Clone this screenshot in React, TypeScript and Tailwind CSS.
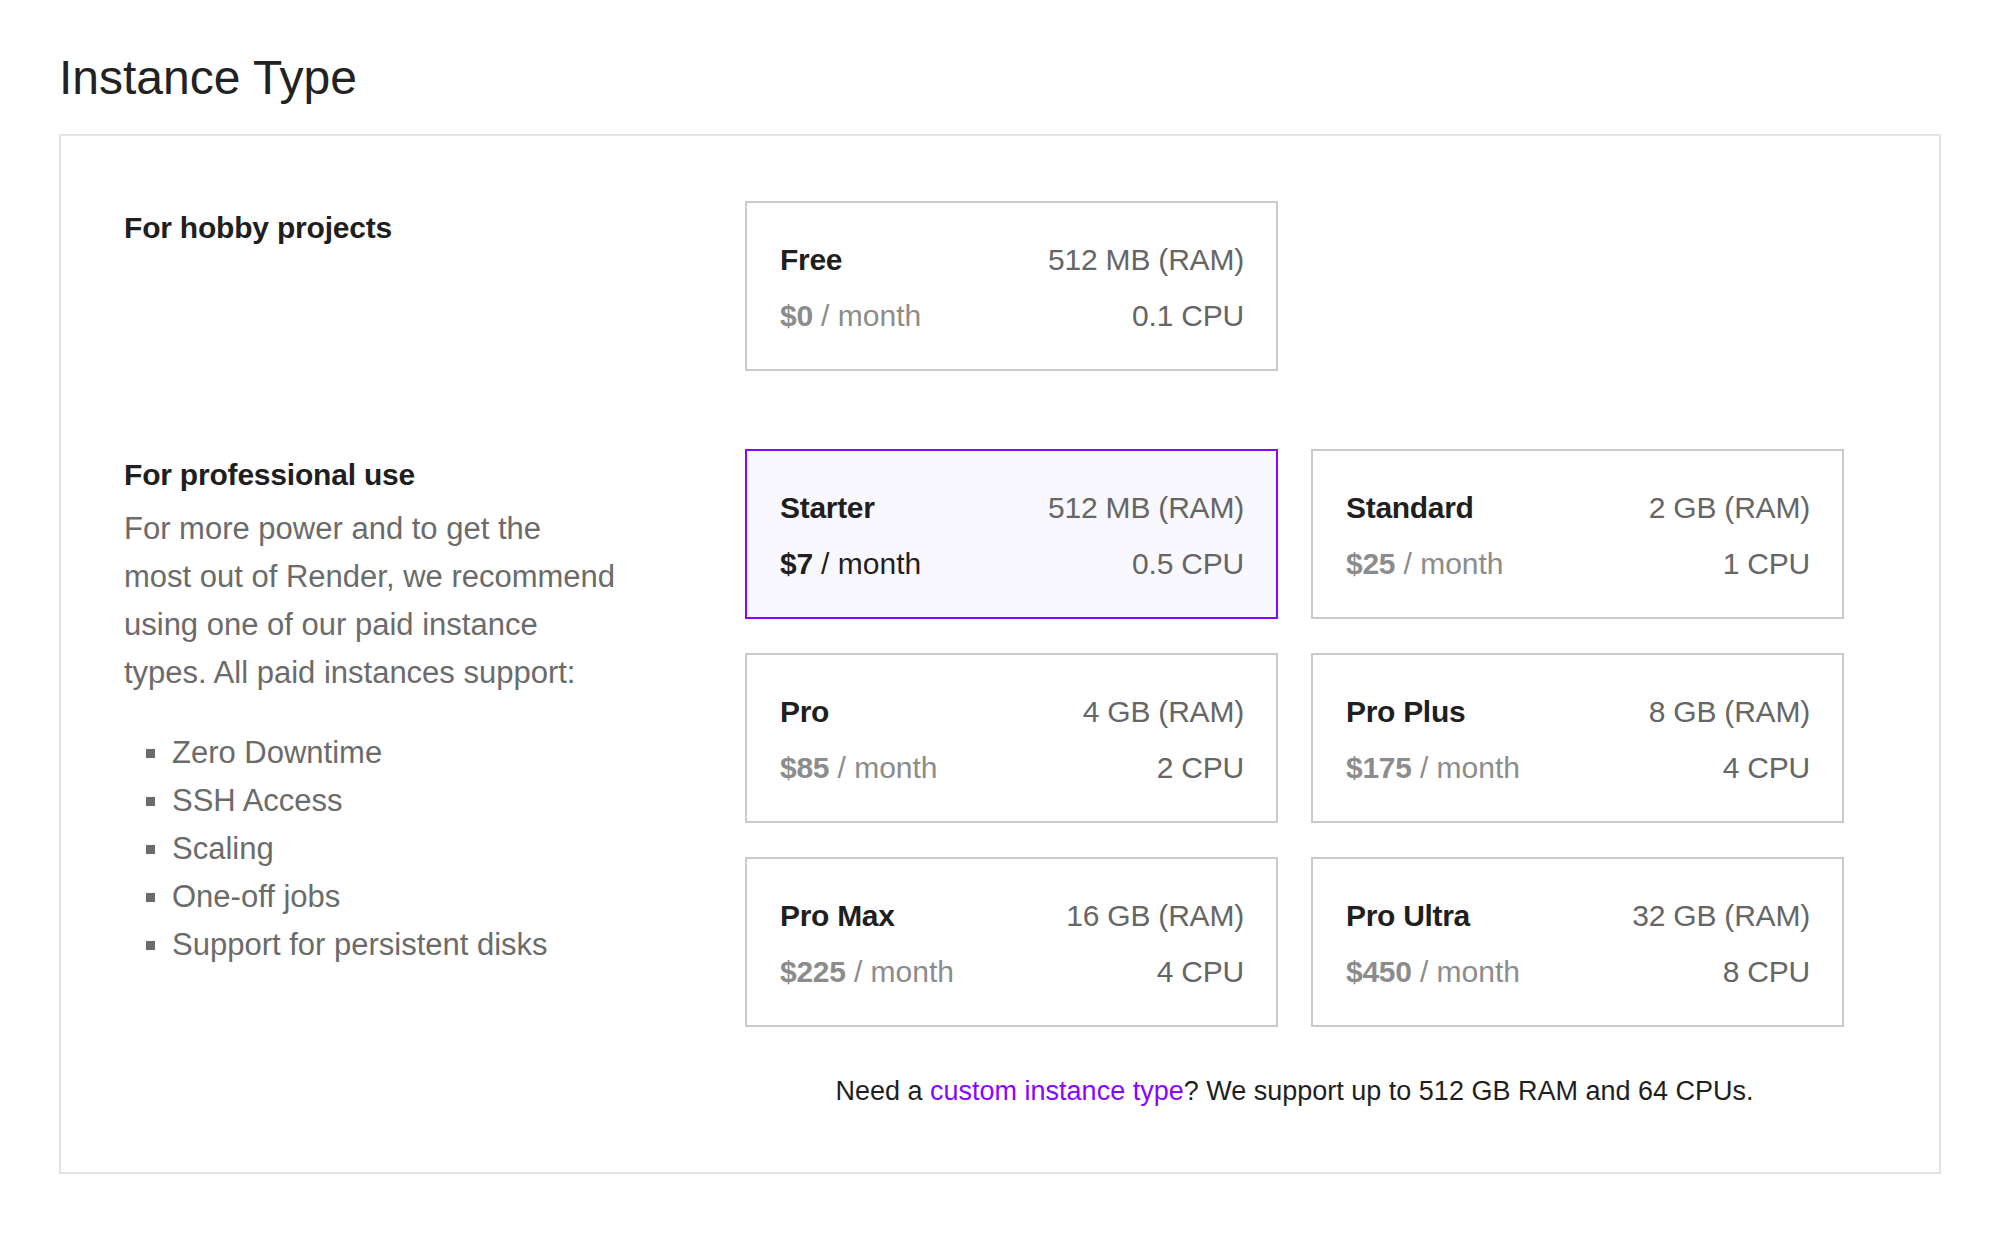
import * as React from "react";

export interface Plan {
  name: string;
  price: string;
  ram: string;
  cpu: string;
}

const HOBBY_PLAN: Plan = { name: "Free", price: "$0", ram: "512 MB (RAM)", cpu: "0.1 CPU" };

const PRO_PLANS: Plan[] = [
  { name: "Starter", price: "$7", ram: "512 MB (RAM)", cpu: "0.5 CPU" },
  { name: "Standard", price: "$25", ram: "2 GB (RAM)", cpu: "1 CPU" },
  { name: "Pro", price: "$85", ram: "4 GB (RAM)", cpu: "2 CPU" },
  { name: "Pro Plus", price: "$175", ram: "8 GB (RAM)", cpu: "4 CPU" },
  { name: "Pro Max", price: "$225", ram: "16 GB (RAM)", cpu: "4 CPU" },
  { name: "Pro Ultra", price: "$450", ram: "32 GB (RAM)", cpu: "8 CPU" },
];

const FEATURES = ["Zero Downtime", "SSH Access", "Scaling", "One-off jobs", "Support for persistent disks"];

function PlanCard({ plan, selected }: { plan: Plan; selected?: boolean }) {
  return (
    <div
      className={[
        "flex h-[170px] w-[533px] flex-col gap-[11px] border-2 pt-[34px] pr-[32px] pb-[31px] pl-[33px] text-[30px] leading-[45px]",
        selected ? "border-[#8a05ff] bg-[#faf8ff]" : "border-[#cacaca] bg-white",
      ].join(" ")}
    >
      <div className="flex items-center justify-between">
        <span className="font-bold tracking-[-0.3px] text-[#1f1f1f]">{plan.name}</span>
        <span className="tracking-[-0.2px] text-[#666666]">{plan.ram}</span>
      </div>
      <div className="flex items-center justify-between">
        <span className={selected ? "text-[#1f1f1f]" : "text-[#8c8c8c]"}>
          <span className="font-bold tracking-[-0.3px]">{plan.price}</span>
          <span> / month</span>
        </span>
        <span className="tracking-[-0.2px] text-[#666666]">{plan.cpu}</span>
      </div>
    </div>
  );
}

export default function App() {
  return (
    <div className="min-h-screen bg-white pt-[50px] pr-[63px] pl-[59px] font-['Liberation_Sans',Arial,sans-serif]">
      <h1 className="text-[48px] leading-[56px] text-[#222222]">Instance Type</h1>

      <section className="mt-[28px] border-2 border-[#e4e4e4] pt-[65px] pb-[61px] pl-[63px]">
        <div className="flex items-start">
          <div className="w-[621px] shrink-0 pt-[4px]">
            <h2 className="text-[30px] leading-[45px] font-bold tracking-[-0.2px] text-[#1f1f1f]">
              For hobby projects
            </h2>
          </div>
          <PlanCard plan={HOBBY_PLAN} />
        </div>

        <div className="mt-[78px] flex items-start">
          <div className="w-[621px] shrink-0 pt-[3px]">
            <h2 className="text-[30px] leading-[45px] font-bold tracking-[-0.2px] text-[#1f1f1f]">
              For professional use
            </h2>
            <p className="mt-2 text-[31px] leading-[48px] text-[#6b6b6b]">
              For more power and to get the
              <br />
              most out of Render, we recommend
              <br />
              using one of our paid instance
              <br />
              types. All paid instances support:
            </p>
            <ul className="mt-[32px] text-[31px] leading-[48px] text-[#6b6b6b]">
              {FEATURES.map((f) => (
                <li key={f} className="flex items-center pl-[22px]">
                  <span className="mr-[17px] inline-block size-[9px] bg-[#6b6b6b]" aria-hidden />
                  {f}
                </li>
              ))}
            </ul>
          </div>

          <div className="w-[1099px] shrink-0">
            <div className="grid grid-cols-[533px_533px] gap-x-[33px] gap-y-[34px]">
              {PRO_PLANS.map((p, i) => (
                <PlanCard key={p.name} plan={p} selected={i === 0} />
              ))}
            </div>
            <p className="mt-[44px] text-center text-[27px] leading-[40px] text-[#1f1f1f]">
              Need a <span className="text-[#8a05ff]">custom instance type</span>? We support up to 512 GB RAM
              and 64 CPUs.
            </p>
          </div>
        </div>
      </section>
    </div>
  );
}
